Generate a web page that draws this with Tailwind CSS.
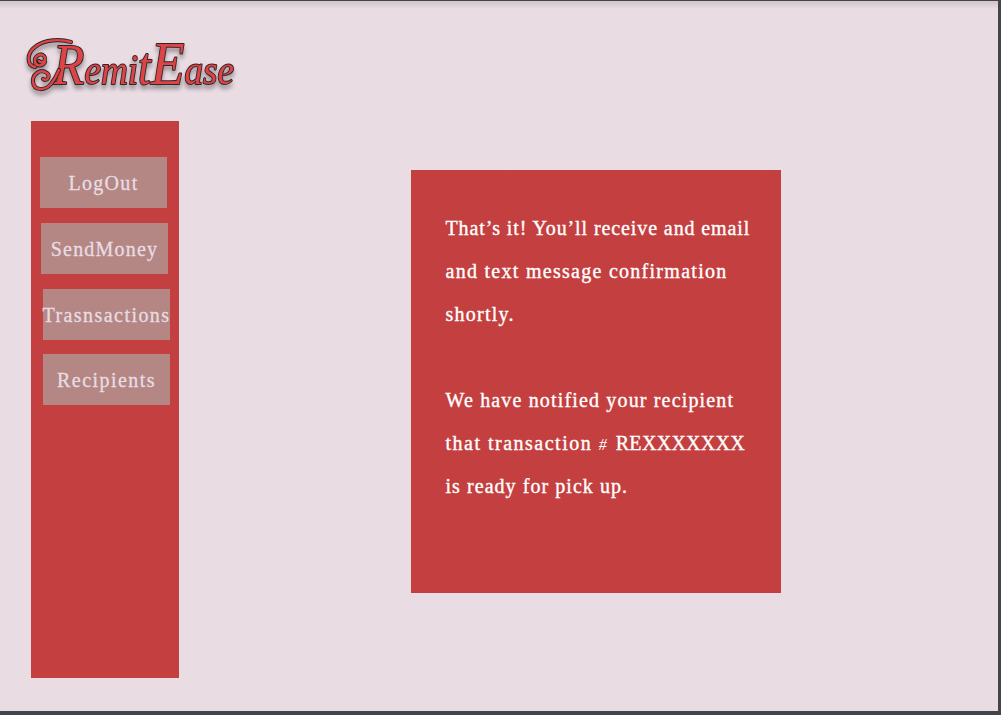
<!DOCTYPE html>
<html lang="en">
<head>
<meta charset="utf-8">
<title>RemitEase</title>
<script src="https://cdn.jsdelivr.net/npm/@tailwindcss/browser@4"></script>
</head>
<body class="h-[715px] w-[1001px] overflow-hidden bg-[#42464b] pt-px pr-[3px] pb-1 font-['Liberation_Serif',serif]">
<div class="h-[710px] w-[998px] bg-[#e9dce3] bg-linear-to-b from-[#d0c5cb] to-[#e9dce3] to-[8px]">
  <header class="h-[120px] pt-[31px] pl-[27px]">
    <svg class="block h-[70px] w-[215px] overflow-visible drop-shadow-[0_4px_2px_rgba(0,0,0,0.35)]" viewBox="0 0 215 70" role="img" aria-label="RemitEase">
      <defs>
        <path id="swash" d="M12 29C16 33 20 27 17 24C13 20 7 25 8 30C9 35 16 34 18 30M8 35C-1 33 0 21 8 15C18 7 34 7 44 10M16 47C20 50 24 44 20 41C13 36 5 43 6 50C7 59 18 59 24 52C28 47 30 43 32 38"/>
      </defs>
      <text x="26" y="52" class="italic" fill="#dc4447" stroke="#322527" stroke-width="2" stroke-linejoin="round" paint-order="stroke" textLength="181" lengthAdjust="spacingAndGlyphs"><tspan font-size="58">R</tspan><tspan font-size="42">emi</tspan><tspan font-size="52">t</tspan><tspan font-size="62">E</tspan><tspan font-size="42">ase</tspan></text>
      <g fill="none" stroke-linecap="round" stroke-linejoin="round">
        <use href="#swash" stroke="#322527" stroke-width="4.2"/>
        <use href="#swash" stroke="#dc4447" stroke-width="2.4"/>
      </g>
    </svg>
  </header>
  <main class="flex">
    <nav class="ml-[31px] h-[557px] w-[148px] bg-[#c43f3f] pt-9 text-[20px] text-[#e8dce3] [-webkit-text-stroke:0.3px]">
      <a class="ml-[9px] flex h-[51px] w-[127px] items-center justify-center bg-[#b48784] tracking-[1.3px]">LogOut</a>
      <a class="mt-[15px] ml-[10px] flex h-[51px] w-[127px] items-center justify-center bg-[#b48784] tracking-[1.2px]">SendMoney</a>
      <a class="mt-[15px] ml-3 flex h-[51px] w-[127px] items-center justify-center bg-[#b48784] tracking-[1.45px]">Trasnsactions</a>
      <a class="mt-[14px] ml-3 flex h-[51px] w-[127px] items-center justify-center bg-[#b48784] tracking-[1.45px]">Recipients</a>
    </nav>
    <section class="mt-[49px] ml-[232px] h-[423px] w-[370px] bg-[#c43f3f] pt-[37px] pl-[34.5px] text-[20px] leading-[43px] whitespace-nowrap text-white [-webkit-text-stroke:0.35px]">
      <p><span class="tracking-[0.9px]">That’s it! You’ll receive and email</span><br><span class="tracking-[1.28px]">and text message confirmation</span><br><span class="tracking-[1.25px]">shortly.</span></p>
      <p class="mt-[43px]"><span class="tracking-[1.16px]">We have notified your recipient</span><br><span class="tracking-[1.5px]">that transaction <span class="inline-block w-[17px] text-[16px] leading-none tracking-normal italic [-webkit-text-stroke:0px]">#</span></span><span class="tracking-[0.3px]">REXXXXXXX</span><br><span class="tracking-[1.05px]">is ready for pick up.</span></p>
    </section>
  </main>
</div>
</body>
</html>
